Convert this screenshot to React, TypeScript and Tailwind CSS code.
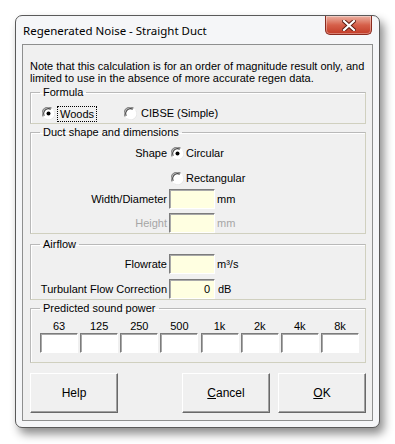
import type { ReactNode } from 'react'

const UI = { fontFamily: '"Liberation Sans", Arial, sans-serif' }
const TITLE = { fontFamily: '"Noto Sans", "Liberation Sans", sans-serif' }

const BANDS = ['63', '125', '250', '500', '1k', '2k', '4k', '8k']

function Radio({ checked }: { checked?: boolean }) {
  return (
    <svg width="13" height="13" viewBox="0 0 13 13" className="shrink-0">
      <circle cx="6.5" cy="6.5" r="6" fill="#fff" />
      <path d="M1.2 9.5 A6 6 0 0 1 9.5 1.2" fill="none" stroke="#8a8a8a" strokeWidth="1.2" />
      <path d="M2.3 8.8 A4.8 4.8 0 0 1 8.8 2.3" fill="none" stroke="#404040" strokeWidth="1.1" />
      <path d="M11.8 3.5 A6 6 0 0 1 3.5 11.8" fill="none" stroke="#e8e8e8" strokeWidth="1" />
      {checked && <circle cx="6.5" cy="6.5" r="2" fill="#000" />}
    </svg>
  )
}

function Field({ value, w = 'w-[46px]', bg = 'bg-[#ffffe1]' }: { value?: string; w?: string; bg?: string }) {
  return (
    <div
      className={`${w} h-[20px] ${bg} border border-t-[#7c7c7c] border-l-[#7c7c7c] border-b-white border-r-white shadow-[inset_1px_1px_0_#a9a9a9] flex items-center justify-end pr-[4px] text-[11px] text-black`}
    >
      {value}
    </div>
  )
}

function Group({ title, className = '', children }: { title: string; className?: string; children: ReactNode }) {
  return (
    <fieldset
      className={`border border-[#d0d0bf] border-t-[#b9b9b9] border-l-[#b9b9b9] shadow-[inset_1px_1px_0_#fff] min-w-0 ${className}`}
    >
      <legend className="ml-[9px] px-[3px] text-[11px] leading-[13px]">{title}</legend>
      {children}
    </fieldset>
  )
}

function Button({ children }: { children: ReactNode }) {
  return (
    <button
      type="button"
      className="w-[88px] h-[40px] bg-[#f0f0f0] border border-t-white border-l-white border-b-[#696969] border-r-[#696969] shadow-[inset_-1px_-1px_0_#a0a0a0] text-[12px]"
    >
      {children}
    </button>
  )
}

function CloseButton() {
  return (
    <div className="absolute right-[7px] top-0 w-[47px] h-[19px] rounded-b-[5px] border border-t-0 border-[#8a2a1e] bg-gradient-to-b from-[#eab0a2] via-[#d6604a] to-[#c23a26] flex items-center justify-center shadow-[inset_0_0_0_1px_rgba(255,255,255,0.35)]">
      <svg width="14" height="11" viewBox="0 0 14 11">
        <path d="M2 1 L12 10 M12 1 L2 10" stroke="#5a1a10" strokeWidth="4" strokeLinecap="square" />
        <path d="M2 1 L12 10 M12 1 L2 10" stroke="#ffffff" strokeWidth="2.2" strokeLinecap="square" />
      </svg>
    </div>
  )
}

export default function App() {
  return (
    <div className="w-[395px] h-[444px] bg-white pt-[15px] pl-[15px]" style={UI}>
      <div className="relative w-[365px] h-[413px] rounded-[7px] border border-[#5a5a5a] bg-[#f5f6f8] shadow-[4px_6px_10px_rgba(0,0,0,0.45)] flex flex-col px-[6px] pb-[6px]">
        <CloseButton />
        <div className="h-[28px] flex items-center pl-[1px] pt-[1px] text-[11.5px] text-black" style={TITLE}>
          Regenerated Noise - Straight Duct
        </div>

        <div className="flex-1 bg-[#f0f0f0] border border-[#8e8f8f] flex flex-col pl-[7px] pr-[6px] text-[11px] text-black">
          <p className="mt-[15px] leading-[12px] text-[11px] whitespace-nowrap">
            Note that this calculation is for an order of magnitude result only, and
            <br />
            limited to use in the absence of more accurate regen data.
          </p>

          <Group title="Formula" className="mt-[2px] h-[38px]">
            <div className="flex items-center h-[24px] pl-[11px] pt-[5px]">
              <Radio checked />
              <span className="ml-[3px] px-[2px] py-[1px] outline outline-1 outline-dotted outline-black leading-[12px]">Woods</span>
              <span className="ml-[28px]">
                <Radio />
              </span>
              <span className="ml-[4px]">CIBSE (Simple)</span>
            </div>
          </Group>

          <Group title="Duct shape and dimensions" className="mt-[2px] h-[108px]">
            <div className="flex flex-col pt-[8px]">
              <div className="flex items-center h-[13px]">
                <span className="w-[136px] text-right">Shape</span>
                <span className="ml-[4px]">
                  <Radio checked />
                </span>
                <span className="ml-[2px]">Circular</span>
              </div>
              <div className="flex items-center h-[13px] mt-[12px]">
                <span className="w-[136px]" />
                <span className="ml-[4px]">
                  <Radio />
                </span>
                <span className="ml-[2px]">Rectangular</span>
              </div>
              <div className="flex items-center mt-[4px]">
                <span className="w-[136px] text-right">Width/Diameter</span>
                <span className="ml-[2px]">
                  <Field />
                </span>
                <span className="ml-[2px]">mm</span>
              </div>
              <div className="flex items-center mt-[4px] text-[#a6a6a6]">
                <span className="w-[136px] text-right">Height</span>
                <span className="ml-[2px]">
                  <Field />
                </span>
                <span className="ml-[2px]">mm</span>
              </div>
            </div>
          </Group>

          <Group title="Airflow" className="mt-[4px] h-[62px]">
            <div className="flex flex-col pt-[3px]">
              <div className="flex items-center">
                <span className="w-[136px] text-right">Flowrate</span>
                <span className="ml-[2px]">
                  <Field />
                </span>
                <span className="ml-[2px]">m³/s</span>
              </div>
              <div className="flex items-center mt-[5px]">
                <span className="w-[136px] text-right">Turbulant Flow Correction</span>
                <span className="ml-[2px]">
                  <Field value="0" />
                </span>
                <span className="ml-[3px]">dB</span>
              </div>
            </div>
          </Group>

          <Group title="Predicted sound power" className="mt-[2px] h-[61px]">
            <div className="grid grid-cols-8 gap-x-[2px] pl-[9px] pr-[6px] pt-[5px]">
              {BANDS.map((b) => (
                <div key={b} className="flex flex-col items-center">
                  <span className="leading-[13px]">{b}</span>
                  <div className="mt-[0px]">
                    <Field w="w-[38px]" bg="bg-white" />
                  </div>
                </div>
              ))}
            </div>
          </Group>

          <div className="flex mt-[10px]">
            <Button>Help</Button>
            <div className="flex-1" />
            <Button>
              <span className="underline">C</span>ancel
            </Button>
            <div className="ml-[8px]">
              <Button>
                <span className="underline">O</span>K
              </Button>
            </div>
          </div>
        </div>
      </div>
    </div>
  )
}
